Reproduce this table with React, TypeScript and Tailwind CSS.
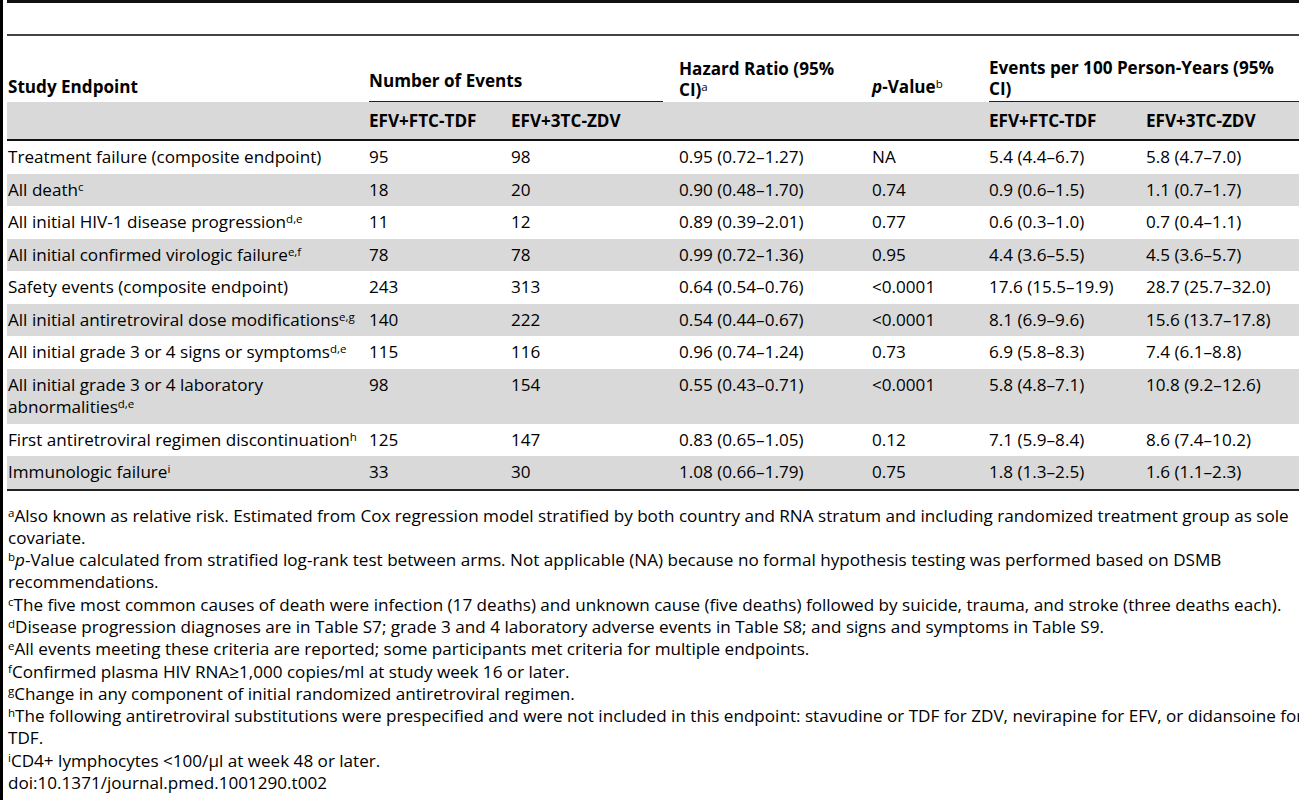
import React from "react";

type Row = {
  label: React.ReactNode;
  values: string[];
};

const Sup = ({ children }: { children: React.ReactNode }) => (
  <sup className="top-[-0.42em] text-[11.5px] font-normal leading-none">{children}</sup>
);

const rows: Row[] = [
  { label: <>Treatment failure (composite endpoint)</>, values: ["95", "98", "0.95 (0.72–1.27)", "NA", "5.4 (4.4–6.7)", "5.8 (4.7–7.0)"] },
  { label: <>All death<Sup>c</Sup></>, values: ["18", "20", "0.90 (0.48–1.70)", "0.74", "0.9 (0.6–1.5)", "1.1 (0.7–1.7)"] },
  { label: <>All initial HIV-1 disease progression<Sup>d,e</Sup></>, values: ["11", "12", "0.89 (0.39–2.01)", "0.77", "0.6 (0.3–1.0)", "0.7 (0.4–1.1)"] },
  { label: <>All initial confirmed virologic failure<Sup>e,f</Sup></>, values: ["78", "78", "0.99 (0.72–1.36)", "0.95", "4.4 (3.6–5.5)", "4.5 (3.6–5.7)"] },
  { label: <>Safety events (composite endpoint)</>, values: ["243", "313", "0.64 (0.54–0.76)", "<0.0001", "17.6 (15.5–19.9)", "28.7 (25.7–32.0)"] },
  { label: <>All initial antiretroviral dose modifications<Sup>e,g</Sup></>, values: ["140", "222", "0.54 (0.44–0.67)", "<0.0001", "8.1 (6.9–9.6)", "15.6 (13.7–17.8)"] },
  { label: <>All initial grade 3 or 4 signs or symptoms<Sup>d,e</Sup></>, values: ["115", "116", "0.96 (0.74–1.24)", "0.73", "6.9 (5.8–8.3)", "7.4 (6.1–8.8)"] },
  { label: <>All initial grade 3 or 4 laboratory<br />abnormalities<Sup>d,e</Sup></>, values: ["98", "154", "0.55 (0.43–0.71)", "<0.0001", "5.8 (4.8–7.1)", "10.8 (9.2–12.6)"] },
  { label: <>First antiretroviral regimen discontinuation<Sup>h</Sup></>, values: ["125", "147", "0.83 (0.65–1.05)", "0.12", "7.1 (5.9–8.4)", "8.6 (7.4–10.2)"] },
  { label: <>Immunologic failure<Sup>i</Sup></>, values: ["33", "30", "1.08 (0.66–1.79)", "0.75", "1.8 (1.3–2.5)", "1.6 (1.1–2.3)"] },
];

export default function App() {
  return (
    <div className="flex h-[800px] w-full overflow-hidden bg-white text-black font-['Open_Sans',sans-serif] text-[17.1px]">
      <div className="w-[3px] shrink-0 bg-black" />
      <div className="ml-[4px] w-[1292px] shrink-0">
        <div className="h-[3px] bg-[#111]" />
        <div className="mt-[31px] h-[2px] bg-[#444]" />

        <table className="w-[1292px] table-fixed border-collapse">
          <colgroup>
            <col className="w-[362px]" />
            <col className="w-[142px]" />
            <col className="w-[168px]" />
            <col className="w-[193px]" />
            <col className="w-[117px]" />
            <col className="w-[157px]" />
            <col className="w-[153px]" />
          </colgroup>
          <thead className="font-bold leading-[21px]">
            <tr className="h-[66px]">
              <th className="pl-[1px] pb-[5px] text-left align-bottom">Study Endpoint</th>
              <th colSpan={2} className="text-left align-bottom">
                <div className="mr-[16px] border-b border-[#222] pb-[10px]">Number of Events</div>
              </th>
              <th className="pb-[2px] text-left align-bottom whitespace-nowrap">
                Hazard Ratio (95%
                <br />
                CI)<Sup>a</Sup>
              </th>
              <th className="pb-[5px] text-left align-bottom whitespace-nowrap">
                <i>p</i>-Value<Sup>b</Sup>
              </th>
              <th colSpan={2} className="text-left align-bottom whitespace-nowrap">
                <div className="border-b border-[#222] pb-[2px]">
                  Events per 100 Person-Years (95%
                  <br />
                  CI)
                </div>
              </th>
            </tr>
            <tr className="h-[38px] border-b-2 border-[#111] bg-[#d9d9d9]">
              <th />
              <th className="text-left">EFV+FTC-TDF</th>
              <th className="text-left">EFV+3TC-ZDV</th>
              <th />
              <th />
              <th className="text-left">EFV+FTC-TDF</th>
              <th className="text-left">EFV+3TC-ZDV</th>
            </tr>
          </thead>
          <tbody className="leading-[22.5px]">
            {rows.map((row, i) => (
              <tr key={i} className={i % 2 === 1 ? "bg-[#d9d9d9]" : "bg-white"}>
                <td className="pl-[1px] py-[5px] align-top whitespace-nowrap">{row.label}</td>
                {row.values.map((v, j) => (
                  <td key={j} className="py-[5px] align-top whitespace-nowrap">
                    {v}
                  </td>
                ))}
              </tr>
            ))}
          </tbody>
        </table>
        <div className="h-[2px] bg-[#222]" />

        <div className="mt-[14px] pl-[1px] leading-[22.3px] whitespace-nowrap">
          <p>
            <Sup>a</Sup>Also known as relative risk. Estimated from Cox regression model stratified by both country and RNA stratum and including randomized treatment group as sole
            <br />
            covariate.
          </p>
          <p>
            <Sup>b</Sup>
            <i>p</i>-Value calculated from stratified log-rank test between arms. Not applicable (NA) because no formal hypothesis testing was performed based on DSMB
            <br />
            recommendations.
          </p>
          <p>
            <Sup>c</Sup>The five most common causes of death were infection (17 deaths) and unknown cause (five deaths) followed by suicide, trauma, and stroke (three deaths each).
          </p>
          <p>
            <Sup>d</Sup>Disease progression diagnoses are in Table S7; grade 3 and 4 laboratory adverse events in Table S8; and signs and symptoms in Table S9.
          </p>
          <p>
            <Sup>e</Sup>All events meeting these criteria are reported; some participants met criteria for multiple endpoints.
          </p>
          <p>
            <Sup>f</Sup>Confirmed plasma HIV RNA≥1,000 copies/ml at study week 16 or later.
          </p>
          <p>
            <Sup>g</Sup>Change in any component of initial randomized antiretroviral regimen.
          </p>
          <p>
            <Sup>h</Sup>The following antiretroviral substitutions were prespecified and were not included in this endpoint: stavudine or TDF for ZDV, nevirapine for EFV, or didansoine for
            <br />
            TDF.
          </p>
          <p>
            <Sup>i</Sup>CD4+ lymphocytes &lt;100/μl at week 48 or later.
          </p>
          <p>doi:10.1371/journal.pmed.1001290.t002</p>
        </div>
      </div>
    </div>
  );
}
